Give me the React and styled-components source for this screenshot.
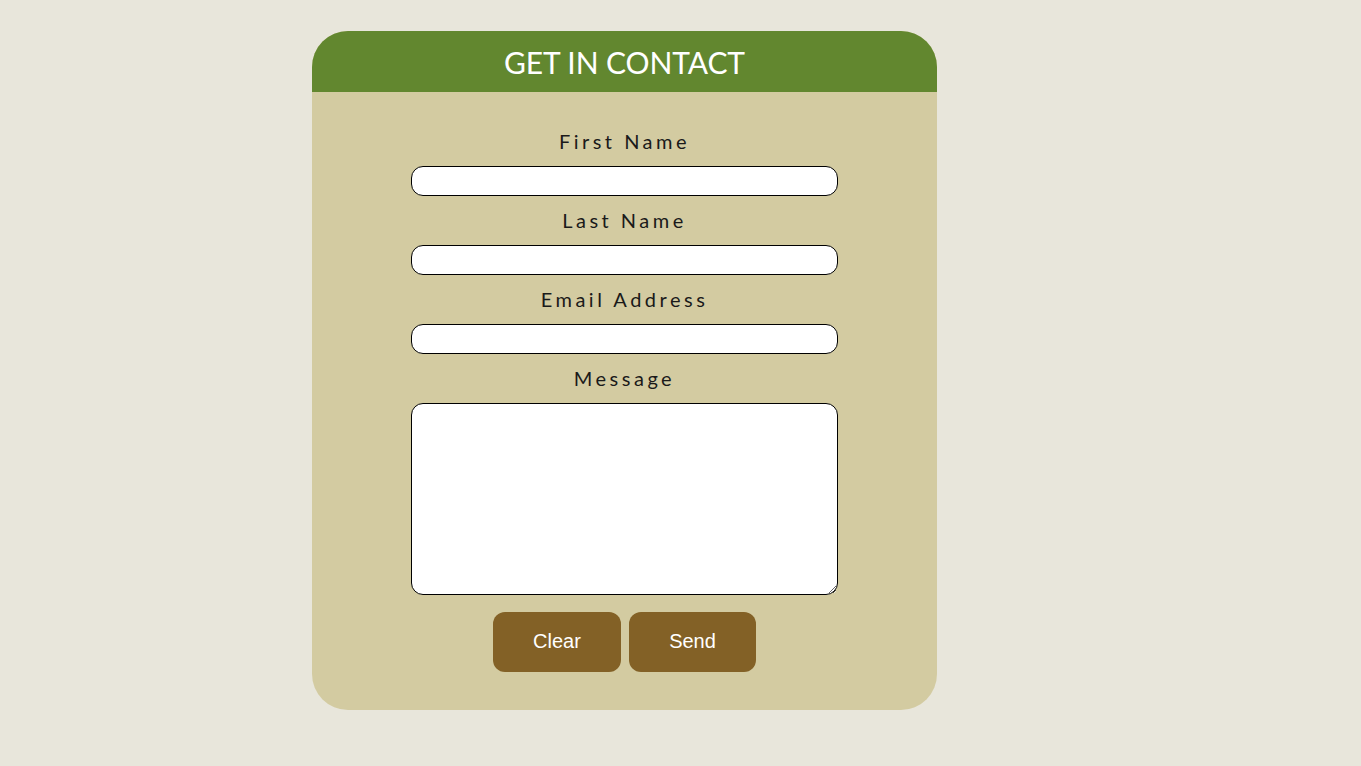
import React, { useState } from "react";
import styled, { createGlobalStyle } from "styled-components";

const GlobalStyle = createGlobalStyle`
  html, body {
    margin: 0;
    padding: 0;
    background: #e8e6db;
  }
  body {
    font-family: Lato, "Liberation Sans", sans-serif;
  }
`;

const Page = styled.div`
  min-height: 766px;
  padding-top: 31px;
  padding-left: 312px;
  box-sizing: border-box;
`;

const Card = styled.section`
  width: 625px;
  height: 679px;
  background: #d3cba1;
  border-radius: 36px;
  overflow: hidden;
`;

const Header = styled.h1`
  margin: 0;
  height: 61px;
  background: #62872f;
  color: #fff;
  font-family: Lato, sans-serif;
  font-weight: 400;
  font-size: 30px;
  letter-spacing: -0.1px;
  line-height: 62px;
  text-align: center;
`;

const Form = styled.form`
  display: flex;
  flex-direction: column;
  align-items: center;
  padding-top: 25px;
`;

const Label = styled.label`
  display: block;
  margin: 12px 0 13px;
  font-family: Lato, sans-serif;
  font-size: 20px;
  line-height: 24px;
  letter-spacing: 3.5px;
  color: #1a1a1a;
  text-align: center;
`;

const Input = styled.input`
  box-sizing: border-box;
  width: 427px;
  height: 30px;
  border: 1px solid #000;
  border-radius: 12px;
  background: #fff;
  padding: 0 10px;
  font-size: 16px;
  outline: none;
`;

const TextArea = styled.textarea`
  box-sizing: border-box;
  display: block;
  width: 427px;
  height: 192px;
  border: 1px solid #000;
  border-radius: 12px;
  background: #fff;
  padding: 6px 10px;
  font-size: 16px;
  outline: none;
`;

const Buttons = styled.div`
  display: flex;
  gap: 8px;
  margin-top: 17px;
`;

const Button = styled.button`
  width: ${(p) => p.$w}px;
  height: 60px;
  padding: 0 0 2px;
  border: none;
  border-radius: 12px;
  background: #836126;
  color: #fff;
  font-family: "Liberation Sans", Arial, sans-serif;
  font-size: 20px;
  cursor: pointer;
`;

export default function App() {
  const [form, setForm] = useState({ first: "", last: "", email: "", message: "" });

  const handleChange = (e) => {
    const { name, value } = e.target;
    setForm((prev) => ({ ...prev, [name]: value }));
  };

  const handleClear = () => setForm({ first: "", last: "", email: "", message: "" });

  return (
    <>
      <GlobalStyle />
      <Page>
        <Card>
          <Header>GET IN CONTACT</Header>
          <Form onSubmit={(e) => e.preventDefault()}>
            <Label htmlFor="first">First Name</Label>
            <Input id="first" name="first" value={form.first} onChange={handleChange} />
            <Label htmlFor="last">Last Name</Label>
            <Input id="last" name="last" value={form.last} onChange={handleChange} />
            <Label htmlFor="email">Email Address</Label>
            <Input id="email" name="email" type="email" value={form.email} onChange={handleChange} />
            <Label htmlFor="message">Message</Label>
            <TextArea id="message" name="message" value={form.message} onChange={handleChange} />
            <Buttons>
              <Button type="button" $w={128} onClick={handleClear}>Clear</Button>
              <Button type="submit" $w={127}>Send</Button>
            </Buttons>
          </Form>
        </Card>
      </Page>
    </>
  );
}
